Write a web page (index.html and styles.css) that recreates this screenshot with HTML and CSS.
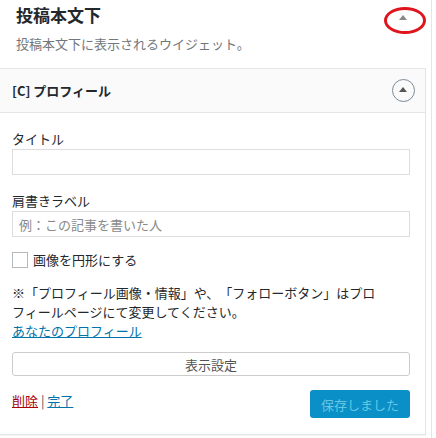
FILE: index.html
```html
<!DOCTYPE html>
<html lang="ja">
<head>
  <meta charset="UTF-8" />
  <title>投稿本文下</title>
  <link rel="stylesheet" href="styles.css">
</head>
<body>
  <div class="sidebar">
    <div class="area-head">
      <h2>投稿本文下</h2>
      <span class="area-toggle"></span>
      <span class="mark"></span>
    </div>
    <p class="area-desc">投稿本文下に表示されるウイジェット。</p>

    <div class="widget">
      <div class="widget-top">
        <h3>[C] プロフィール</h3>
        <span class="widget-toggle"></span>
      </div>
      <div class="widget-inside">
        <label class="field">
          <span>タイトル</span>
          <input type="text" />
        </label>
        <label class="field">
          <span>肩書きラベル</span>
          <input type="text" placeholder="例：この記事を書いた人" />
        </label>
        <label class="check">
          <input type="checkbox" />
          <span>画像を円形にする</span>
        </label>
        <p class="note">※「プロフィール画像・情報」や、「フォローボタン」はプロ<br>フィールページにて変更してください。<br><a href="#">あなたのプロフィール</a></p>
        <button class="display-btn">表示設定</button>
        <div class="widget-actions">
          <div class="links"><a href="#" class="delete">削除</a> | <a href="#">完了</a></div>
          <button class="save-btn" disabled>保存しました</button>
        </div>
      </div>
    </div>
  </div>
</body>
</html>
```

FILE: styles.css
```css
* {
  box-sizing: border-box;
}

body {
  margin: 0;
  background: #fff;
  font-family: "Noto Sans CJK JP", "Noto Sans", sans-serif;
  color: #23282d;
  font-size: 13px;
  text-spacing-trim: space-all;
}

.sidebar {
  width: 432px;
  height: 438px;
  border-right: 1px solid #e5e5e5;
}

.area-head {
  position: relative;
  height: 30px;
  padding: 3px 16px 0;
}

.area-head h2 {
  margin: 0;
  font-size: 17px;
  line-height: 24px;
  font-weight: bold;
}

.area-toggle {
  position: absolute;
  left: 399px;
  top: 15px;
  border-left: 4px solid transparent;
  border-right: 4px solid transparent;
  border-bottom: 5px solid #888;
}

.mark {
  position: absolute;
  left: 384px;
  top: 7px;
  width: 42px;
  height: 27px;
  border: 3px solid #e0141c;
  border-radius: 50%;
}

.area-desc {
  margin: 0;
  padding: 4px 16px 0;
  height: 38px;
  color: #72777c;
  line-height: 19px;
}

.widget {
  width: 426px;
  border: 1px solid #e5e5e5;
  border-left: none;
  box-shadow: 0 1px 1px rgba(0,0,0,0.04);
}

.widget-top {
  display: flex;
  justify-content: space-between;
  align-items: center;
  height: 44px;
  padding: 0 10px 0 12px;
  background: #fafafa;
  border-bottom: 1px solid #e5e5e5;
}

.widget-top h3 {
  margin: 0;
  font-size: 13px;
  font-weight: bold;
}

.widget-toggle {
  position: relative;
  width: 23px;
  height: 23px;
  border: 1.5px solid #7b8a99;
  border-radius: 50%;
}

.widget-toggle::after {
  content: "";
  position: absolute;
  left: 6px;
  top: 7px;
  border-left: 4px solid transparent;
  border-right: 4px solid transparent;
  border-bottom: 5px solid #555;
}

.widget-inside {
  padding: 16px 15px 16px 12px;
}

.field {
  display: block;
  margin-bottom: 16px;
}

.field span {
  display: block;
  line-height: 19px;
}

.field input {
  display: block;
  width: 100%;
  height: 26px;
  margin-top: 1px;
  padding: 2px 6px;
  border: 1px solid #ddd;
  font-family: inherit;
  font-size: 13px;
  color: #32373c;
}

.field input::placeholder {
  color: #8a8a8a;
}

.check {
  display: flex;
  align-items: center;
  gap: 5px;
  margin-top: -3px;
}

.check input {
  appearance: none;
  width: 16px;
  height: 16px;
  margin: 0;
  border: 1px solid #b4b9be;
  background: #fff;
}

.note {
  margin: 14px 0 12px;
  line-height: 19px;
}

.note a,
.links a {
  color: #0073aa;
}

.links .delete {
  color: #a00;
}

.display-btn {
  display: block;
  width: 100%;
  height: 24px;
  border: 1px solid #ccc;
  border-radius: 3px;
  background: #fff;
  font-family: inherit;
  font-size: 13px;
  color: #555;
}

.widget-actions {
  display: flex;
  justify-content: space-between;
  align-items: flex-start;
  margin-top: 14px;
}

.links {
  color: #555;
  line-height: 19px;
  padding-top: 1px;
}

.save-btn {
  width: 100px;
  height: 28px;
  border: none;
  border-radius: 3px;
  background: #0a8fc6;
  color: #66c6e4;
  font-family: inherit;
  font-size: 13px;
}
```
